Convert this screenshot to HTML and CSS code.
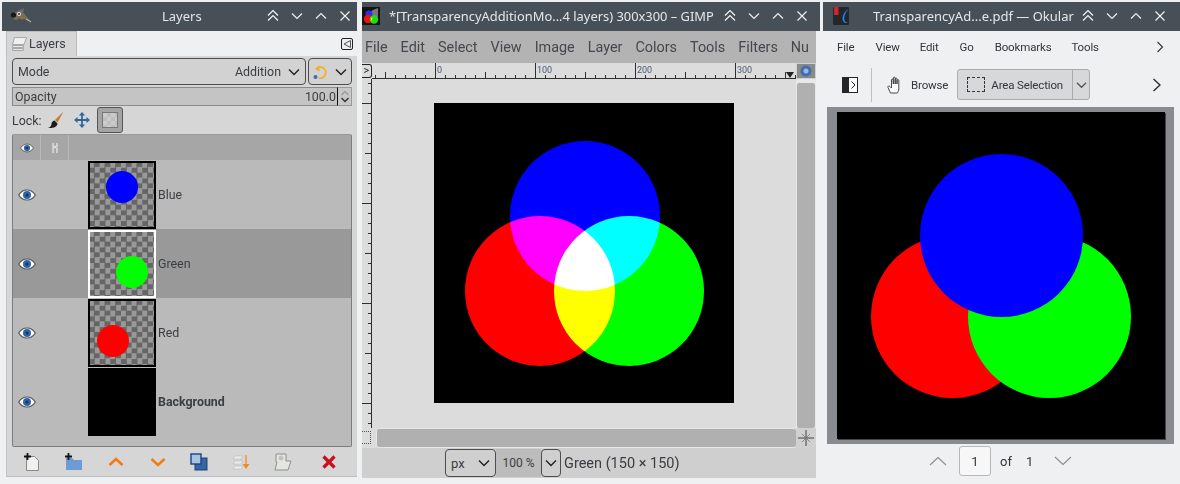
FILE: index.html
```html
<!DOCTYPE html>
<html lang="en">
<head>
<meta charset="utf-8">
<title>GIMP and Okular</title>
<link rel="stylesheet" href="styles.css">
</head>
<body>
<svg class="sprite" aria-hidden="true">
  <defs>
    <symbol id="chev-d" viewBox="0 0 12 8"><path d="M1 1.500 6 6.500 11 1.500" fill="none" stroke="currentColor" stroke-width="1.400"/></symbol>
    <symbol id="t-shade" viewBox="0 0 14 14"><path d="M2 6.500 7 1.500 12 6.500M2 11.500 7 6.500 12 11.500" fill="none" stroke="currentColor" stroke-width="1.200"/></symbol>
    <symbol id="t-down" viewBox="0 0 14 14"><path d="M2 4.500 7 9.500 12 4.500" fill="none" stroke="currentColor" stroke-width="1.200"/></symbol>
    <symbol id="t-up" viewBox="0 0 14 14"><path d="M2 9.500 7 4.500 12 9.500" fill="none" stroke="currentColor" stroke-width="1.200"/></symbol>
    <symbol id="t-close" viewBox="0 0 14 14"><path d="M2.500 2.500 11.500 11.500M11.500 2.500 2.500 11.500" fill="none" stroke="currentColor" stroke-width="1.200"/></symbol>
    <symbol id="eye" viewBox="0 0 18 12"><path d="M.7 6C3 2.300 6 1 9 1s6 1.300 8.300 5C15 9.700 12 11 9 11S3 9.700.7 6Z" fill="#fff" stroke="#555" stroke-width="1.200"/><circle cx="9" cy="6" r="4" fill="#2f65a8"/><circle cx="9" cy="6" r="1.500" fill="#16345c"/></symbol>
    <pattern id="tick-x" width="100" height="16" patternUnits="userSpaceOnUse" x="63">
      <path d="M.5 0V16M10.500 12V16M20.500 12V16M30.500 12V16M40.500 12V16M50.500 9V16M60.500 12V16M70.500 12V16M80.500 12V16M90.500 12V16" stroke="#2e2e2e"/>
    </pattern>
    <pattern id="tick-y" width="10" height="100" patternUnits="userSpaceOnUse" y="24">
      <path d="M10 .5H0M10 10.500H6M10 20.500H6M10 30.500H6M10 40.500H6M10 50.500H3M10 60.500H6M10 70.500H6M10 80.500H6M10 90.500H6" stroke="#2e2e2e"/>
    </pattern>
  </defs>
</svg>

<main class="desktop">

  <section class="window win-layers">
    <header class="titlebar">
      <svg class="app-icon wilber" viewBox="0 0 22 16"><path d="M4 5c3-2 7-3 10-5l-1 4 3 4 6 6-8-3-3-1-5 2C3 12 2 8 4 5Z" fill="#756f5f"/><circle cx="3.500" cy="7" r="2.600" fill="#15171a"/><circle cx="9" cy="6" r="2" fill="#ece8d8"/><circle cx="9" cy="6" r=".9" fill="#111"/><path d="M9 9l6 .5-3 2.500Z" fill="#a8682a"/><path d="M16 11l5 3" stroke="#c9c4b0"/></svg>
      <h1 class="title title-center">Layers</h1>
      <div class="win-btns">
        <svg class="wb"><use href="#t-shade"/></svg><svg class="wb"><use href="#t-down"/></svg><svg class="wb"><use href="#t-up"/></svg><svg class="wb"><use href="#t-close"/></svg>
      </div>
    </header>
    <div class="dock">
      <div class="tabbar">
        <div class="tab">
          <svg class="ic16" viewBox="0 0 16 16"><path d="M1.500 12.500h11v2h-11Z" fill="#e2e2e2" stroke="#a8a8a8"/><path d="M1.500 9.500h11v2h-11Z" fill="#e8e8e8" stroke="#a8a8a8"/><path d="M3.500 1.500h12l-2.500 7H1.500Z" fill="#f0f0f0" stroke="#a8a8a8"/></svg>
          <span>Layers</span>
        </div>
        <svg class="dock-menu" viewBox="0 0 12 12"><rect x=".5" y=".5" width="11" height="11" rx="1.500" fill="#eee" stroke="#222"/><path d="M9.500 2.500 3 6l6.500 3.500Z" fill="none" stroke="#555"/></svg>
      </div>
      <div class="panel">
        <div class="mode-row">
          <div class="combo combo-mode"><span>Mode</span><span class="combo-val">Addition</span><svg class="chev"><use href="#chev-d"/></svg></div>
          <div class="combo combo-alpha">
            <svg class="ic16" viewBox="0 0 16 16"><path d="M4 5a5.500 5.500 0 1 1 3 9" fill="none" stroke="#f2b01e" stroke-width="1.600"/><path d="M7.500 1.500 3 5l4.500 2.500Z" fill="#f2b01e"/><circle cx="3.500" cy="13" r="2" fill="#3a6fb0"/></svg>
            <svg class="chev"><use href="#chev-d"/></svg>
          </div>
        </div>
        <div class="opacity-row">
          <div class="opacity-bar"><span>Opacity</span><span>100.0</span></div>
          <div class="spin">
            <svg class="spin-a" viewBox="0 0 10 6"><path d="M1.500 5 5 1.500 8.500 5" fill="none" stroke="#999" stroke-width="1.400"/></svg>
            <svg class="spin-a" viewBox="0 0 10 6"><path d="M1.500 1 5 4.500 8.500 1" fill="none" stroke="#333" stroke-width="1.400"/></svg>
          </div>
        </div>
        <div class="lock-row">
          <span>Lock:</span>
          <svg class="lock-ic" viewBox="0 0 18 18"><path d="M16.500.5 8 9l2.500 2.500Z" fill="#c77a2a"/><path d="M7.500 9.500l3 3c0 3.500-5 5-9.500 4.500 2.500-1 3.500-2.500 3.500-4.500 0-1.500 2-3 3-3Z" fill="#1c1c1c"/></svg>
          <svg class="lock-move" viewBox="0 0 18 18"><path d="M9 0 12.500 4H10V8h4V5.500L18 9l-4 3.500V10H10v4h2.500L9 18l-3.500-4H8V10H4v2.500L0 9l4-3.500V8H8V4H5.500Z" fill="#33659c"/></svg>
          <div class="lock-on"><span class="lock-check"></span></div>
        </div>
        <div class="layers">
          <div class="layers-head">
            <div class="lh-eye"><svg class="eye-sm"><use href="#eye"/></svg></div>
            <div class="lh-link"><svg class="link-ic" viewBox="0 0 8 12"><path d="M2 1v3l4 2v5M6 1v3L2 6v5" fill="none" stroke="#ddd" stroke-width="1.500"/></svg></div>
          </div>
          <div class="layer">
            <svg class="eye"><use href="#eye"/></svg>
            <div class="thumb checker"><span class="dot dot-blue"></span></div>
            <span class="l-name">Blue</span>
          </div>
          <div class="layer layer-active">
            <svg class="eye"><use href="#eye"/></svg>
            <div class="thumb checker"><span class="dot dot-green"></span></div>
            <span class="l-name">Green</span>
          </div>
          <div class="layer">
            <svg class="eye"><use href="#eye"/></svg>
            <div class="thumb checker"><span class="dot dot-red"></span></div>
            <span class="l-name">Red</span>
          </div>
          <div class="layer">
            <svg class="eye"><use href="#eye"/></svg>
            <div class="thumb thumb-black"></div>
            <span class="l-name l-bold">Background</span>
          </div>
        </div>
        <div class="layer-tools">
          <svg class="tool" viewBox="0 0 18 18"><path d="M3.500 3.500h8l4 4v10h-12Z" fill="#f0f0ec" stroke="#888"/><path d="M1 3.500h7M4.500 0v7" stroke="#111" stroke-width="1.800"/></svg>
          <svg class="tool" viewBox="0 0 18 18"><path d="M1 5h6l2 2h8v10H1Z" fill="#6d9bd3"/><path d="M0 3.500h7M3.500 0v7" stroke="#111" stroke-width="1.800"/></svg>
          <svg class="tool" viewBox="0 0 18 18"><path d="M2.500 12 9 6l6.500 6" fill="none" stroke="#f07c16" stroke-width="2.600"/></svg>
          <svg class="tool" viewBox="0 0 18 18"><path d="M2.500 6 9 12l6.500-6" fill="none" stroke="#f07c16" stroke-width="2.600"/></svg>
          <svg class="tool" viewBox="0 0 18 18"><rect x="5" y="5" width="12" height="12" fill="#3465a4" stroke="#1d4379"/><rect x="1" y="1" width="10" height="10" fill="#a8c4e4" stroke="#1d4379" stroke-width="1.400"/></svg>
          <svg class="tool" viewBox="0 0 18 18"><path d="M3 3h8L9 6H1ZM3 8h8L9 11H1ZM3 13h8l-2 3H1Z" fill="#eee" stroke="#bbb" stroke-width=".7"/><path d="M14 2v10" stroke="#f5a040" stroke-width="1.800"/><path d="M10.500 11h7L14 16Z" fill="#f08a20"/></svg>
          <svg class="tool" viewBox="0 0 18 18"><path d="M2 1h10v7h5l-3 9H1l2-8H2Z" fill="#e4e6e0" stroke="#8f8f8f"/><circle cx="7" cy="5" r="2.500" fill="#c2c2c2"/></svg>
          <svg class="tool tool-del" viewBox="0 0 18 18"><path d="M3.500 3.500 14.500 14.500M14.500 3.500 3.500 14.500" stroke="#c8101a" stroke-width="3.200"/></svg>
        </div>
      </div>
    </div>
  </section>

  <section class="window win-gimp">
    <header class="titlebar">
      <svg class="app-icon gimp-logo" viewBox="0 0 18 18"><rect width="18" height="18" fill="#141414"/><path d="M7 6l4-3 5-2v9l-6 2Z" fill="#77767b"/><circle cx="7" cy="7" r="3.500" fill="#2233ee"/><circle cx="6" cy="12" r="4.200" fill="#ee1111"/><circle cx="12" cy="12.500" r="4.200" fill="#22dd11"/><path d="M8.500 10.500 10.500 11 9.500 14.500Z" fill="#eeee44"/></svg>
      <h1 class="title title-gimp">*[TransparencyAdditionMo...4 layers) 300x300 – GIMP</h1>
      <div class="win-btns">
        <svg class="wb"><use href="#t-shade"/></svg><svg class="wb"><use href="#t-down"/></svg><svg class="wb"><use href="#t-up"/></svg><svg class="wb"><use href="#t-close"/></svg>
      </div>
    </header>
    <nav class="gimp-menu">
      <span>File</span><span>Edit</span><span>Select</span><span>View</span><span>Image</span><span>Layer</span><span>Colors</span><span>Tools</span><span>Filters</span><span>Nu</span>
    </nav>
    <div class="editor">
      <div class="ruler-corner">&gt;</div>
      <div class="ruler-h">
        <svg class="ruler-svg" width="424" height="16"><rect width="424" height="16" fill="url(#tick-x)"/><rect y="15" width="424" height="1" fill="#2e2e2e"/></svg>
        <div class="ruler-labels"><span>0</span><span>100</span><span>200</span><span>300</span></div>
        <span class="ruler-mark"></span>
      </div>
      <div class="nav-btn"><span class="nav-dot"></span></div>
      <div class="ruler-v"><svg class="ruler-svg" width="10" height="349"><rect width="10" height="349" fill="url(#tick-y)"/><rect x="9" width="1" height="349" fill="#2e2e2e"/></svg></div>
      <div class="canvas">
        <svg class="art" width="300" height="300" viewBox="0 0 300 300">
          <rect width="300" height="300" fill="#000"/>
          <g class="add-group">
            <circle class="mix" cx="151" cy="113" r="75" fill="#00f"/>
            <circle class="mix" cx="106" cy="188" r="75" fill="#f00"/>
            <circle class="mix" cx="195" cy="188" r="75" fill="#0f0"/>
          </g>
        </svg>
      </div>
      <div class="vscroll"><div class="vthumb"></div></div>
      <div class="qmask"></div>
      <div class="hscroll"></div>
      <div class="nav-cross">
        <svg viewBox="0 0 16 16" class="ic16"><path d="M8 0V16M0 8H16" stroke="#333" stroke-width=".9"/><path d="M4 4 12 12M12 4 4 12" stroke="#777" stroke-width=".8"/></svg>
      </div>
    </div>
    <footer class="gimp-status">
      <div class="combo combo-unit"><span>px</span><svg class="chev"><use href="#chev-d"/></svg></div>
      <div class="zoom-val">100 %</div>
      <div class="combo combo-zoom"><svg class="chev"><use href="#chev-d"/></svg></div>
      <span class="status-text">Green (150 × 150)</span>
    </footer>
  </section>

  <section class="window win-okular">
    <header class="titlebar">
      <svg class="app-icon okular-logo" viewBox="0 0 16 18"><rect width="16" height="18" rx="1" fill="#23272b"/><rect x="1" width="4.500" height="8" fill="#d4232e"/><path d="M15.500 2C12 4 9.500 8 9.500 12c0 2.500 1.800 4.500 5.500 4-3-1-3.800-2.500-3.800-4.500 0-3.500 2-7 4.300-9.500Z" fill="#1f88e5"/></svg>
      <h1 class="title title-okular">TransparencyAd...e.pdf — Okular</h1>
      <div class="win-btns">
        <svg class="wb"><use href="#t-shade"/></svg><svg class="wb"><use href="#t-down"/></svg><svg class="wb"><use href="#t-up"/></svg><svg class="wb"><use href="#t-close"/></svg>
      </div>
    </header>
    <nav class="ok-menu">
      <span>File</span><span>View</span><span>Edit</span><span>Go</span><span>Bookmarks</span><span>Tools</span>
      <svg class="ok-more" viewBox="0 0 8 12"><path d="M1.500 1 6.500 6 1.500 11" fill="none" stroke="#31363b" stroke-width="1.100"/></svg>
    </nav>
    <div class="ok-tools">
      <svg class="ok-side" viewBox="0 0 16 16"><rect x=".5" y=".5" width="15" height="15" fill="#fcfcfc" stroke="#232629"/><rect width="7" height="16" fill="#232629"/><path d="M9.500 4.500 13 8l-3.500 3.500" fill="none" stroke="#232629"/></svg>
      <span class="ok-sep"></span>
      <svg class="ok-hand" viewBox="0 0 18 18"><path d="M3.500 17 1 11.500c-.5-1.500 1-2 2-1l1.500 1.500V4c0-1.200 1.800-1.200 1.800 0v4-6c0-1.200 1.900-1.200 1.900 0v6-5c0-1.200 1.800-1.200 1.800 0v5-3.500c0-1.200 1.800-1.200 1.800 0V13c0 2-1 3-1.500 4Z" fill="#fcfcfc" stroke="#31363b" stroke-width=".9"/></svg>
      <span class="ok-browse">Browse</span>
      <div class="ok-area">
        <div class="ok-area-main"><span class="dash-rect"></span><span>Area Selection</span></div>
        <div class="ok-area-drop"><svg class="chev chev-thin"><use href="#chev-d"/></svg></div>
      </div>
      <svg class="ok-next" viewBox="0 0 10 14"><path d="M1.500 1 8 7l-6.500 6" fill="none" stroke="#232629" stroke-width="1.300"/></svg>
    </div>
    <div class="viewer">
      <svg class="page" width="328" height="327" viewBox="0 0 328 327">
        <rect width="328" height="327" fill="#000"/>
        <circle cx="115.500" cy="204.500" r="81.500" fill="#f00"/>
        <circle cx="212.500" cy="204.500" r="81.500" fill="#0f0"/>
        <circle cx="164.500" cy="123.500" r="81.500" fill="#00f"/>
      </svg>
    </div>
    <footer class="pager">
      <svg class="pg-chev" viewBox="0 0 18 10"><path d="M1 9 9 1.500 17 9" fill="none" stroke="#8a8d90" stroke-width="1.100"/></svg>
      <div class="pg-box">1</div>
      <span class="pg-of">of</span>
      <span class="pg-total">1</span>
      <svg class="pg-chev pg-down" viewBox="0 0 18 10"><path d="M1 1 9 8.500 17 1" fill="none" stroke="#8a8d90" stroke-width="1.100"/></svg>
    </footer>
  </section>

</main>
</body>
</html>
```

FILE: styles.css
```css
* { box-sizing: border-box; }
html, body { margin: 0; padding: 0; }
body {
  width: 1180px;
  height: 484px;
  overflow: hidden;
  background: #eff0f1;
  font-family: "Roboto", "Liberation Sans", sans-serif;
  color: #3a3d42;
}
.sprite { position: absolute; width: 0; height: 0; }
.desktop { display: flex; height: 484px; padding: 2px 0 0 2px; }
.window { display: flex; flex-direction: column; height: 482px; min-width: 0; }
.win-layers { width: 355px; margin-right: 5px; }
.win-gimp { width: 458px; margin-right: 3px; }
.win-okular { width: 357px; }

.titlebar {
  flex: none;
  height: 29px;
  background: #475057;
  color: #eff0f1;
  display: flex;
  align-items: center;
  padding: 0 5px 2px 0;
}
.win-gimp .titlebar { padding-right: 11px; }
.win-okular .titlebar { padding-right: 13px; }
.title {
  margin: 0;
  font: 400 13px "Noto Sans", sans-serif;
  white-space: nowrap;
  color: #e4e7e9;
}
.title-center { margin-left: 130px; flex: 1; }
.title-gimp { margin-left: 9px; flex: 1; font-size: 12.900px; }
.title-okular { margin-left: 24px; flex: 1; }
.app-icon { flex: none; }
.wilber { width: 22px; height: 16px; margin-left: 8px; }
.gimp-logo { width: 18px; height: 18px; }
.okular-logo { width: 16px; height: 18px; margin-left: 10px; }
.win-btns { display: flex; gap: 10px; flex: none; }
.wb { width: 14px; height: 14px; color: #eff0f1; display: block; }
.win-btns .wb:first-child { color: #f4f6f7; }

/* Layers dock */
.dock { flex: 1; display: flex; flex-direction: column; padding: 0 0 7px 4px; min-height: 0; }
.tabbar { height: 25px; flex: none; display: flex; justify-content: space-between; align-items: center; }
.tab {
  width: 71px;
  height: 25px;
  background: #d6d6d6;
  border: 1px solid #bdbdbd;
  border-bottom: 0;
  display: flex;
  align-items: center;
  gap: 2px;
  padding: 0 0 1px 4px;
  font-size: 12.500px;
}
.ic16 { width: 16px; height: 16px; flex: none; display: block; }
.dock-menu { width: 12px; height: 12px; margin-right: 4px; }
.panel {
  flex: 1;
  background: #d6d6d6;
  border-left: 1px solid #c4c4c4;
  border-bottom: 1px solid #bdbdbd;
  padding: 2px 5px 0 5px;
  display: flex;
  flex-direction: column;
  font-size: 12.400px;
}
.combo {
  display: flex;
  align-items: center;
  border: 1px solid #4d4d4d;
  border-radius: 4px;
  background: #d2d2d2;
}
.mode-row { display: flex; gap: 2px; height: 27px; flex: none; }
.combo-mode { width: 294px; padding: 0 5px; }
.combo-val { margin-left: auto; margin-right: 7px; }
.combo-alpha { width: 44px; padding-left: 3px; gap: 7px; }
.chev { width: 12px; height: 8px; color: #222; flex: none; display: block; }
.opacity-row { display: flex; height: 19px; margin-top: 2px; flex: none; }
.opacity-bar {
  flex: 1;
  background: #c4c4c4;
  border: 1px solid #8a8a8a;
  border-right: 1px solid #111;
  display: flex;
  justify-content: space-between;
  align-items: center;
  padding: 0 1px 0 2px;
}
.spin { width: 14px; background: #c8c8c8; border: 1px solid #9a9a9a; border-left: 0; display: flex; flex-direction: column; justify-content: center; align-items: center; gap: 1px; }
.spin-a { width: 10px; height: 6px; display: block; }
.lock-row { display: flex; align-items: center; height: 26px; margin: 1px 0 1px; flex: none; }
.lock-ic { width: 18px; height: 18px; margin-left: 5px; flex: none; }
.lock-move { width: 16px; height: 16px; margin-left: 9px; flex: none; }
.lock-on {
  width: 26px;
  height: 26px;
  margin-left: 7px;
  background: #a4a4a4;
  border: 1px solid #555;
  border-radius: 3px;
  display: flex;
  align-items: center;
  justify-content: center;
}
.lock-check {
  width: 16px;
  height: 16px;
  background: repeating-conic-gradient(#bebebe 0 25%, #cccccc 0 50%) 0 0 / 8px 8px;
  border: 1px solid #777;
}
.layers {
  height: 313px;
  flex: none;
  background: #bababa;
  border: 1px solid #7d7d7d;
  border-radius: 2px;
  border-top-color: #999;
}
.layers-head { display: flex; height: 25px; background: #a6a6a6; }
.lh-eye { width: 28px; border-right: 1px solid #b8b8b8; display: flex; align-items: center; justify-content: center; }
.eye-sm { width: 14px; height: 10px; }
.lh-link { width: 28px; border-right: 1px solid #b8b8b8; display: flex; align-items: center; justify-content: center; }
.link-ic { width: 8px; height: 12px; }
.layer { display: flex; align-items: center; height: 69px; padding-left: 5px; }
.layer-active { background: #999; }
.eye { width: 18px; height: 12px; flex: none; margin-right: 52px; }
.thumb { width: 68px; height: 68px; position: relative; border: 2px solid #000; flex: none; }
.layer-active .thumb { border-color: #fff; }
.checker { background: repeating-conic-gradient(#666 0 25%, #999 0 50%) -1px -1px / 10.660px 10.660px; }
.thumb-black { background: #000; }
.dot { position: absolute; width: 32px; height: 32px; border-radius: 50%; }
.dot-blue { background: #00f; left: 16px; top: 8px; }
.dot-green { background: #0f0; left: 26px; top: 24px; }
.dot-red { background: #f00; left: 7px; top: 24px; }
.l-name { margin-left: 2px; }
.l-bold { font-weight: 700; }
.layer-tools { flex: 1; display: flex; align-items: center; padding: 0 14px 0 11px; justify-content: space-between; }
.tool { width: 18px; height: 18px; display: block; }
.tool-del { margin-left: 4px; }

/* GIMP image window */
.gimp-menu {
  height: 32px;
  flex: none;
  width: 454px;
  background: #b3b3b3;
  display: flex;
  align-items: center;
  gap: 13px;
  padding-left: 3px;
  font-size: 14.400px;
  overflow: hidden;
  white-space: nowrap;
  color: #44484e;
}
.gimp-menu span { flex: none; }
.editor {
  flex: none;
  width: 454px;
  height: 385px;
  display: grid;
  grid-template-columns: 10px 424px 20px;
  grid-template-rows: 16px 349px 20px;
  background: #dcdcdc;
}
.ruler-corner {
  font-size: 11px;
  line-height: 12px;
  text-align: center;
  border: 1px solid #222;
  border-left: 0;
  border-radius: 0 3px 3px 0;
  height: 14px;
  margin-top: 1px;
  color: #222;
}
.ruler-h { position: relative; overflow: hidden; }
.ruler-svg { display: block; }
.ruler-labels {
  position: absolute;
  left: 65px;
  top: 2px;
  display: grid;
  grid-template-columns: repeat(4, 100px);
  font-size: 9px;
  line-height: 10px;
  color: #4a5a75;
}
.ruler-mark {
  position: absolute;
  right: 2px;
  bottom: 1px;
  width: 0;
  height: 0;
  border: 4px solid transparent;
  border-top: 6px solid #222;
  border-bottom: 0;
}
.nav-btn { display: flex; align-items: center; justify-content: center; background: #d0d0d0; }
.nav-dot {
  width: 18px;
  height: 14px;
  background: radial-gradient(circle, #9db8dc 0 2px, #3f6fae 3px 5px, #8a8a8a 6px);
}
.ruler-v { overflow: hidden; }
.canvas { padding: 24px 0 0 62px; overflow: hidden; }
.art { display: block; }
.add-group { isolation: isolate; }
.mix { mix-blend-mode: screen; }
.vscroll { padding: 4px 1px 0 1px; background: #e8e8e8; }
.vthumb { height: 100%; background: #b0b0b0; border-radius: 2px; }
.qmask { border: 1px dotted #555; border-left: 0; margin: 3px 0 4px; width: 9px; }
.hscroll { background: #b0b0b0; border: 1px solid #e6e6e6; border-radius: 3px; margin-left: 4px; height: 20px; width: 421px; }
.nav-cross { display: flex; align-items: center; justify-content: center; background: #d0d0d0; }
.gimp-status {
  flex: none;
  width: 454px;
  height: 30px;
  background: #cfcfcf;
  display: flex;
  align-items: center;
  padding-left: 83px;
  font-size: 14.500px;
}
.combo-unit { width: 51px; height: 28px; padding: 0 5px; justify-content: space-between; font-size: 13px; background: #cfcfcf; }
.zoom-val { width: 45px; height: 28px; background: #bcbcbc; display: flex; align-items: center; justify-content: center; font-size: 12px; }
.combo-zoom { width: 20px; height: 28px; justify-content: center; background: #cfcfcf; }
.status-text { margin-left: 3px; }

/* Okular */
.ok-menu {
  height: 31px;
  flex: none;
  display: flex;
  align-items: center;
  padding-left: 14px;
  font-size: 11.500px;
  letter-spacing: -.15px;
  color: #31363b;
}
.ok-menu span:nth-child(1) { margin-right: 21px; }
.ok-menu span:nth-child(2) { margin-right: 20px; }
.ok-menu span:nth-child(3) { margin-right: 21px; }
.ok-menu span:nth-child(4) { margin-right: 21px; }
.ok-menu span:nth-child(5) { margin-right: 20px; }
.ok-more { width: 8px; height: 12px; margin-left: auto; margin-right: 16px; }
.ok-tools { height: 45px; flex: none; display: flex; align-items: center; padding-left: 19px; font-size: 11.500px; letter-spacing: -.15px; color: #31363b; }
.ok-side { width: 16px; height: 16px; }
.ok-sep { width: 1px; height: 34px; background: #bdbfc1; margin-left: 13px; }
.ok-hand { width: 18px; height: 18px; margin-left: 15px; }
.ok-browse { margin-left: 6px; }
.ok-area {
  display: flex;
  width: 133px;
  height: 31px;
  margin-left: 9px;
  background: #d6d8da;
  border: 1px solid #a9abad;
  border-radius: 3px;
}
.ok-area-main { width: 115px; display: flex; align-items: center; gap: 6px; padding-left: 9px; border-right: 1px solid #a9abad; }
.dash-rect { width: 18px; height: 15px; border: 1px dashed #31363b; flex: none; }
.ok-area-drop { flex: 1; display: flex; align-items: center; justify-content: center; }
.chev-thin { color: #555; width: 11px; }
.ok-next { width: 10px; height: 14px; margin-left: 62px; }
.viewer {
  flex: none;
  width: 347px;
  height: 337px;
  margin-left: 4px;
  background: #888c91;
  padding: 5px 0 0 10px;
}
.page { display: block; box-shadow: 1px 1px 0 #444; }
.pager { flex: 1; display: flex; align-items: center; font-size: 13px; color: #31363b; padding: 0 0 6px 106px; }
.pg-chev { width: 18px; height: 10px; }
.pg-box {
  width: 32px;
  height: 30px;
  margin-left: 12px;
  background: #f7f7f8;
  border: 1px solid #b4b6b8;
  border-radius: 3px;
  display: flex;
  align-items: center;
  justify-content: center;
}
.pg-of { margin-left: 9px; }
.pg-total { margin-left: 14px; }
.pg-down { margin-left: 21px; }
```
